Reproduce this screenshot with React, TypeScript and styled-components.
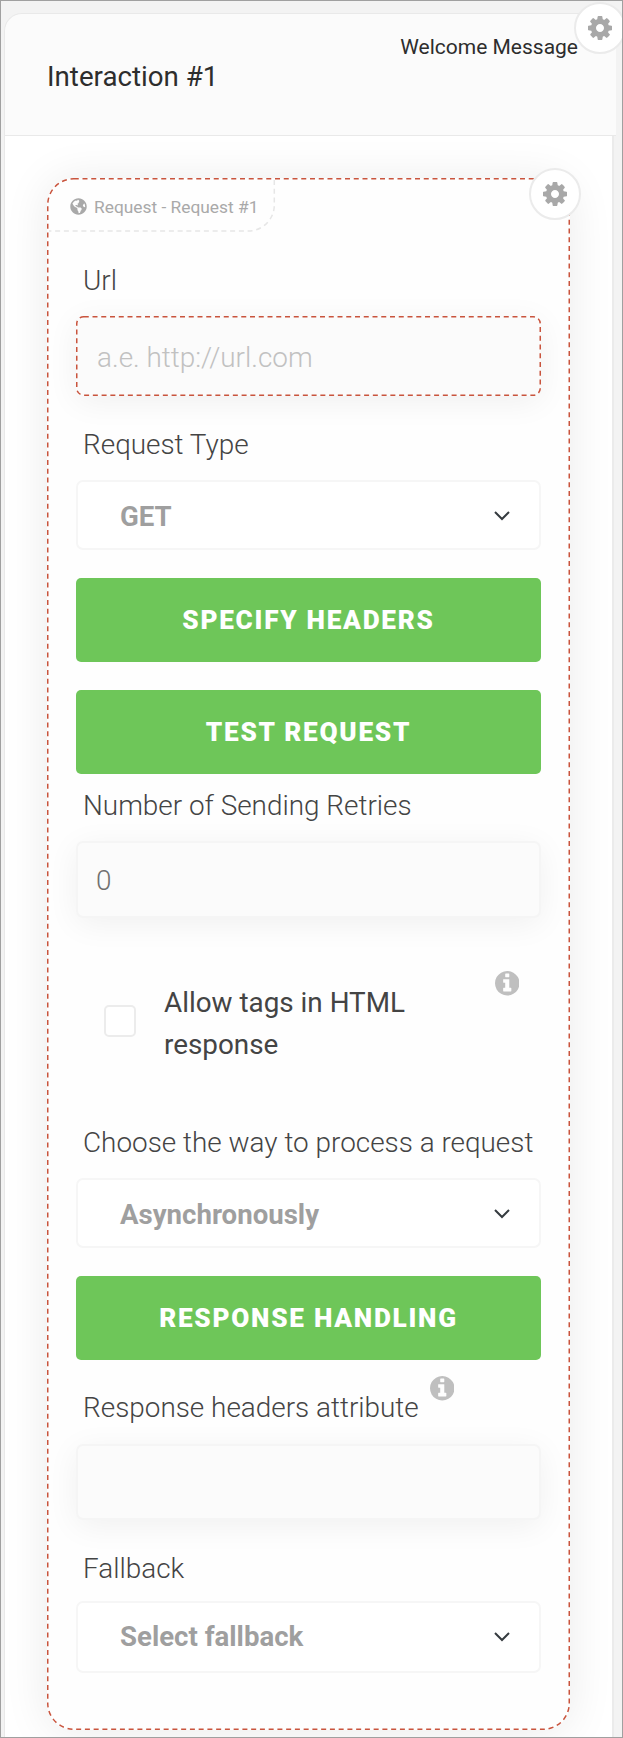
import React from 'react';
import styled, { createGlobalStyle } from 'styled-components';
import { FaGlobeAmericas } from 'react-icons/fa';

const GlobalStyle = createGlobalStyle`
  *, *::before, *::after { box-sizing: border-box; }
  body {
    margin: 0;
    background: #f3f3f3;
    font-family: Roboto, "Liberation Sans", sans-serif;
  }
`;

const Frame = styled.main`
  position: relative;
  height: 1738px;
  padding: 12px 6px 0 3px;
  border: 1px solid #a0a0a0;
  overflow: hidden;
`;

const Header = styled.header`
  display: flex;
  justify-content: space-between;
  height: 123px;
  padding: 0 38px 0 42px;
  border: 1px solid #e9e9e9;
  border-right: 0;
  border-top-left-radius: 18px;
  background: #fbfbfb;
  color: #2d2d2d;
`;

const Title = styled.h1`
  margin: 46px 0 0;
  font-size: 27.7px;
  font-weight: 400;
  line-height: 33px;
`;

const Subtitle = styled.span`
  margin-top: 21px;
  font-size: 21px;
  line-height: 25px;
`;

const Body = styled.section`
  height: 1620px;
  margin-right: 2px;
  padding: 42px 42px 0;
  border-left: 1px solid #e9e9e9;
  border-right: 2px solid #ebebeb;
  background: #fff;
`;

const Card = styled.div`
  position: relative;
  display: flex;
  flex-direction: column;
  width: 523px;
  height: 1552px;
  padding: 0 29px;
  border-radius: 26px;
  background: #fefefe;
  box-shadow: 0 2px 46px rgba(0, 0, 0, 0.085);
`;

const Outline = styled.svg`
  position: absolute;
  inset: 0;
  width: 100%;
  height: 100%;
  overflow: visible;
  pointer-events: none;
  fill: none;
  stroke: #c9543d;
  stroke-width: 1.5;
  stroke-dasharray: 5 3.75;

  rect {
    width: calc(100% - 1.5px);
    height: calc(100% - 1.5px);
  }
`;

const Tag = styled.div`
  position: relative;
  display: flex;
  align-items: center;
  gap: 7px;
  width: 228px;
  height: 54px;
  margin: 0 0 0 -29px;
  padding: 3px 0 0 23px;
  color: #a9a9a9;
  font-size: 17.35px;
  line-height: 21px;
  white-space: nowrap;

  span { padding-top: 1px; }
`;

const TagOutline = styled(Outline)`
  stroke: #e6e6e6;
`;

const GearButton = styled.button<{ $top: number; $right: number }>`
  position: absolute;
  top: ${(p) => p.$top}px;
  right: ${(p) => p.$right}px;
  display: grid;
  place-items: center;
  width: 52px;
  height: 52px;
  padding: 0;
  border: 2px solid #ebebeb;
  border-radius: 50%;
  background: #fff;
  color: #a8a8a8;
`;

const Label = styled.label<{ $top: number }>`
  display: flex;
  align-items: flex-start;
  height: 34px;
  margin: ${(p) => p.$top}px 0 0 7px;
  color: #444;
  font-size: 27.9px;
  font-weight: 300;
  line-height: 34px;
  white-space: nowrap;
`;

const Field = styled.input<{ $top: number; $height: number }>`
  width: 465px;
  height: ${(p) => p.$height}px;
  margin-top: ${(p) => p.$top}px;
  padding: 2px 18px 0;
  border: 2px solid #f5f5f5;
  border-radius: 7px;
  outline: 0;
  background: #fbfbfb;
  box-shadow: 0 6px 32px rgba(0, 0, 0, 0.06);
  color: #707070;
  font: 300 27.9px Roboto, sans-serif;
  &::placeholder { color: #c1c1c1; opacity: 1; }
`;

const RequiredField = styled.div`
  position: relative;
  display: flex;
  margin-top: 18px;
  input { margin: 0; padding: 2px 19px 0; border-color: transparent; }
`;

const Select = styled.button<{ $top: number; $height: number; $padding: string }>`
  display: flex;
  align-items: center;
  justify-content: space-between;
  width: 465px;
  height: ${(p) => p.$height}px;
  margin-top: ${(p) => p.$top}px;
  padding: ${(p) => p.$padding};
  border: 2px solid #f6f6f6;
  border-radius: 7px;
  background: #fff;
  color: #9f9f9f;
  font: 700 27.6px Roboto, sans-serif;
`;

const Action = styled.button<{ $top: number }>`
  width: 465px;
  height: 84px;
  margin-top: ${(p) => p.$top}px;
  padding: 0 0 1px;
  border: 0;
  border-radius: 5px;
  background: #6ec659;
  color: #fff;
  font: 900 26.2px Roboto, sans-serif;
  letter-spacing: 1.72px;
`;

const CheckRow = styled.div`
  display: flex;
  margin: 53px 22px 0 28px;
`;

const Checkbox = styled.span`
  width: 32px;
  height: 32px;
  margin-top: 34px;
  border: 2px solid #ececec;
  border-radius: 5px;
  background: #fff;
`;

const CheckText = styled.span`
  flex: 1;
  margin: 11px 60px 0 28px;
  color: #444;
  font-size: 27.85px;
  line-height: 42px;
`;

const InfoIcon = styled.svg<{ $raised?: boolean }>`
  flex: none;
  width: 24.5px;
  height: 24.5px;
  margin: ${(p) => (p.$raised ? '-15px 0 0 11px' : '0')};
  fill: #bfbfbf;
`;

const Gear = () => (
  <svg width="24" height="24" viewBox="128 128 1536 1536" fill="currentColor">
    <path d="M1152 896q0-106-75-181t-181-75-181 75-75 181 75 181 181 75 181-75 75-181zm512-109v222q0 12-8 23t-20 13l-185 28q-19 54-39 91 35 50 107 138 10 12 10 25t-9 23q-27 37-99 108t-94 71q-12 0-26-9l-138-108q-44 23-91 38-16 136-29 186-7 28-36 28h-222q-14 0-24.5-8.5t-11.5-21.5l-28-184q-49-16-90-37l-141 107q-10 9-25 9-14 0-25-11-126-114-165-168-7-10-7-23 0-12 8-23 15-21 51-66.5t54-70.5q-27-50-41-99l-183-27q-13-2-21-12.5t-8-23.5v-222q0-12 8-23t19-13l186-28q14-46 39-92-40-57-107-138-10-12-10-24 0-10 9-23 26-36 98.5-107.5t94.5-71.5q13 0 26 10l138 107q44-23 91-38 16-136 29-186 7-28 36-28h222q14 0 24.5 8.5t11.5 21.5l28 184q49 16 90 37l142-107q9-9 24-9 13 0 25 10 129 119 165 170 7 8 7 22 0 12-8 23-15 21-51 66.5t-54 70.5q26 50 41 98l183 28q13 2 21 12.5t8 23.5z" />
  </svg>
);

const Info = ({ raised }: { raised?: boolean }) => (
  <InfoIcon $raised={raised} viewBox="128 128 1536 1536">
    <path d="M1152 1376v-160q0-14-9-23t-23-9h-96v-512q0-14-9-23t-23-9h-320q-14 0-23 9t-9 23v160q0 14 9 23t23 9h96v320h-96q-14 0-23 9t-9 23v160q0 14 9 23t23 9h448q14 0 23-9t9-23zm-128-896v-160q0-14-9-23t-23-9h-192q-14 0-23 9t-9 23v160q0 14 9 23t23 9h192q14 0 23-9t9-23zm640 416q0 209-103 385.5t-279.5 279.5-385.5 103-385.5-103-279.5-279.5-103-385.5 103-385.5 279.5-279.5 385.5-103 385.5 103 279.5 279.5 103 385.5z" />
  </InfoIcon>
);

const Chevron = () => (
  <svg width="16" height="10" viewBox="0 0 16 10" fill="none" stroke="#353b3f" strokeWidth="2">
    <path d="M1 1l7 7 7-7" />
  </svg>
);

type DropdownProps = { value: string; top: number; height?: number; padding?: string };

const Dropdown = ({ value, top, height = 70, padding = '2px 29px 0 42px' }: DropdownProps) => (
  <Select $top={top} $height={height} $padding={padding}>
    {value}
    <Chevron />
  </Select>
);

export default function App() {
  return (
    <Frame>
      <GlobalStyle />
      <Header>
        <Title>Interaction #1</Title>
        <Subtitle>Welcome Message</Subtitle>
      </Header>
      <GearButton $top={1} $right={-4}><Gear /></GearButton>
      <Body>
        <Card>
          <Outline><rect x="0.75" y="0.75" rx="26" /></Outline>
          <Tag>
            <TagOutline><path d="M227.3 2v25a26 26 0 0 1-26 26H2" /></TagOutline>
            <FaGlobeAmericas size={17} />
            <span>Request - Request #1</span>
          </Tag>
          <GearButton $top={-10} $right={-10.5}><Gear /></GearButton>

          <Label $top={32}>Url</Label>
          <RequiredField>
            <Field $top={0} $height={80} placeholder="a.e. http://url.com" />
            <Outline><rect x="0.75" y="0.75" rx="7" /></Outline>
          </RequiredField>

          <Label $top={32}>Request Type</Label>
          <Dropdown value="GET" top={18} />
          <Action $top={28}>SPECIFY HEADERS</Action>
          <Action $top={28}>TEST REQUEST</Action>

          <Label $top={15}>Number of Sending Retries</Label>
          <Field $top={18} $height={77} defaultValue="0" />

          <CheckRow>
            <Checkbox />
            <CheckText>Allow tags in HTML response</CheckText>
            <Info />
          </CheckRow>

          <Label $top={60}>Choose the way to process a request</Label>
          <Dropdown value="Asynchronously" top={18} />
          <Action $top={28}>RESPONSE HANDLING</Action>

          <Label $top={31}>Response headers attribute<Info raised /></Label>
          <Field $top={19} $height={76} />

          <Label $top={32}>Fallback</Label>
          <Dropdown value="Select fallback" top={15} height={72} padding="0 29px 1px 42px" />
        </Card>
      </Body>
    </Frame>
  );
}
